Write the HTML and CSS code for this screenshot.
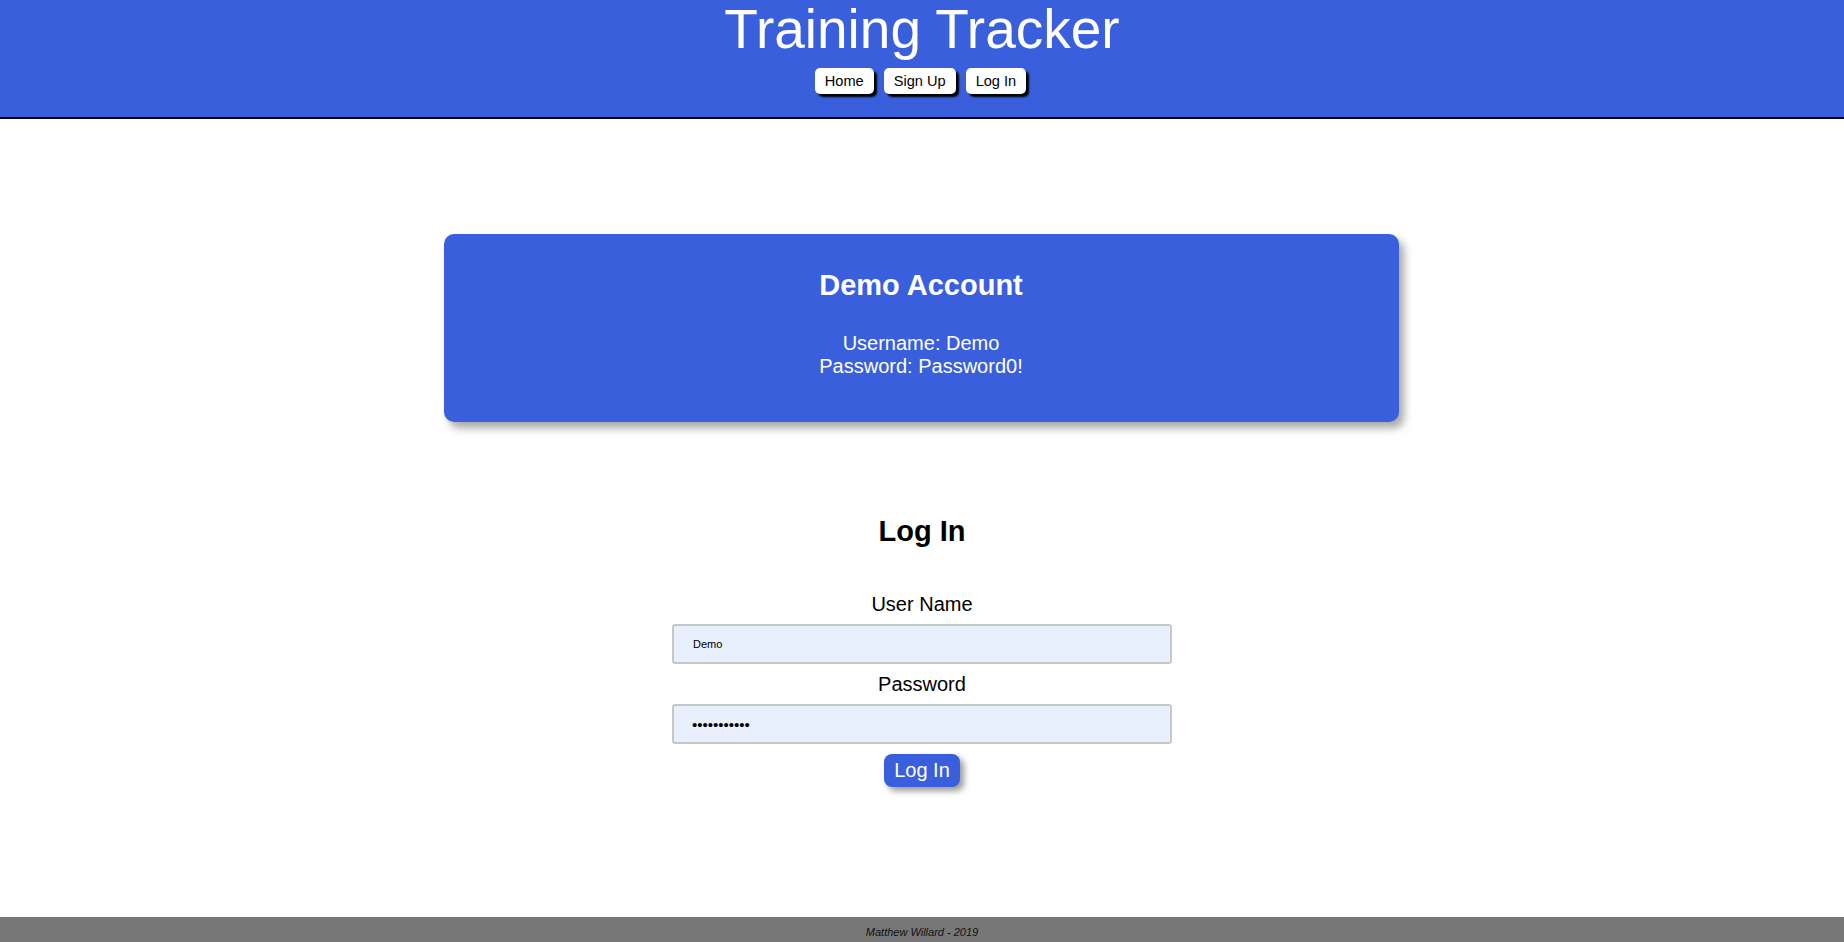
FILE: index.html
```html
<!DOCTYPE html>
<html lang="en">
<head>
<meta charset="utf-8">
<title>Training Tracker</title>
<link rel="stylesheet" href="styles.css">
</head>
<body>
<div class="page">
  <header class="header">
    <h1 class="title">Training Tracker</h1>
    <nav class="nav">
      <a class="nav-btn" href="#">Home</a>
      <a class="nav-btn" href="#">Sign Up</a>
      <a class="nav-btn" href="#">Log In</a>
    </nav>
  </header>
  <main class="main">
    <section class="demo-card">
      <h2 class="demo-title">Demo Account</h2>
      <p class="demo-text">Username: Demo<br>Password: Password0!</p>
    </section>
    <form class="login">
      <h2 class="login-title">Log In</h2>
      <label class="field-label" for="user">User Name</label>
      <input class="field" id="user" type="text" value="Demo">
      <label class="field-label" for="pass">Password</label>
      <input class="field field-pass" id="pass" type="password" value="Password00!">
      <button class="submit" type="button">Log In</button>
    </form>
  </main>
  <footer class="footer">Matthew Willard - 2019</footer>
</div>
</body>
</html>
```
FILE: styles.css
```css
* { box-sizing: border-box; }
html, body { margin: 0; padding: 0; height: 100%; }
body {
  font-family: "Liberation Sans", Arial, Helvetica, sans-serif;
  background: #ffffff;
  color: #000;
}
.page {
  min-height: 100vh;
  display: flex;
  flex-direction: column;
}
.header {
  background: #395fdd;
  height: 119px;
  border-bottom: 2px solid #000;
  display: flex;
  flex-direction: column;
  align-items: center;
}
.title {
  margin: 0;
  padding-top: 2px;
  font-size: 55px;
  line-height: 1;
  font-weight: normal;
  color: #fff;
}
.nav {
  display: flex;
  gap: 10px;
  margin-top: 11px;
  margin-right: 3px;
}
.nav-btn {
  display: block;
  background: #fff;
  color: #000;
  text-decoration: none;
  font-size: 14.6px;
  line-height: 18px;
  padding: 4px 10px;
  border-radius: 5px;
  box-shadow: 3px 3px 2px #000;
}
.main {
  flex: 1;
  display: flex;
  flex-direction: column;
  align-items: center;
}
.demo-card {
  margin-top: 115px;
  margin-right: 2px;
  width: 955px;
  height: 188px;
  background: #395fdd;
  border-radius: 10px;
  box-shadow: 5px 6px 8px rgba(0,0,0,0.35);
  color: #fff;
  text-align: center;
  padding-top: 35px;
}
.demo-title {
  margin: 0;
  font-size: 29px;
  font-weight: bold;
}
.demo-text {
  margin: 30px 0 0;
  font-size: 20px;
}
.login {
  margin-top: 93px;
  display: flex;
  flex-direction: column;
  align-items: center;
}
.login-title {
  margin: 0 0 45px;
  font-size: 29px;
  font-weight: bold;
}
.field-label {
  font-size: 20px;
  margin-bottom: 8px;
}
.field {
  width: 500px;
  height: 40px;
  border: 2px solid #c8c8c8;
  border-radius: 3px;
  background: #e8effd;
  font-family: "Liberation Sans", Arial, sans-serif;
  font-size: 11px;
  padding: 0 0 0 19px;
  margin: 0 0 9px;
  color: #000;
}
.field-pass {
  font-size: 15px;
  padding-left: 18px;
}
.submit {
  margin-top: 1px;
  background: #395fdd;
  color: #fff;
  border: none;
  border-radius: 8px;
  font-family: "Liberation Sans", Arial, sans-serif;
  font-size: 20px;
  line-height: 23px;
  padding: 5px 10px;
  box-shadow: 4px 4px 6px rgba(0,0,0,0.4);
}
.footer {
  height: 25px;
  background: #777777;
  color: #111;
  font-style: italic;
  font-size: 11px;
  text-align: center;
  padding-top: 9px;
}
```
